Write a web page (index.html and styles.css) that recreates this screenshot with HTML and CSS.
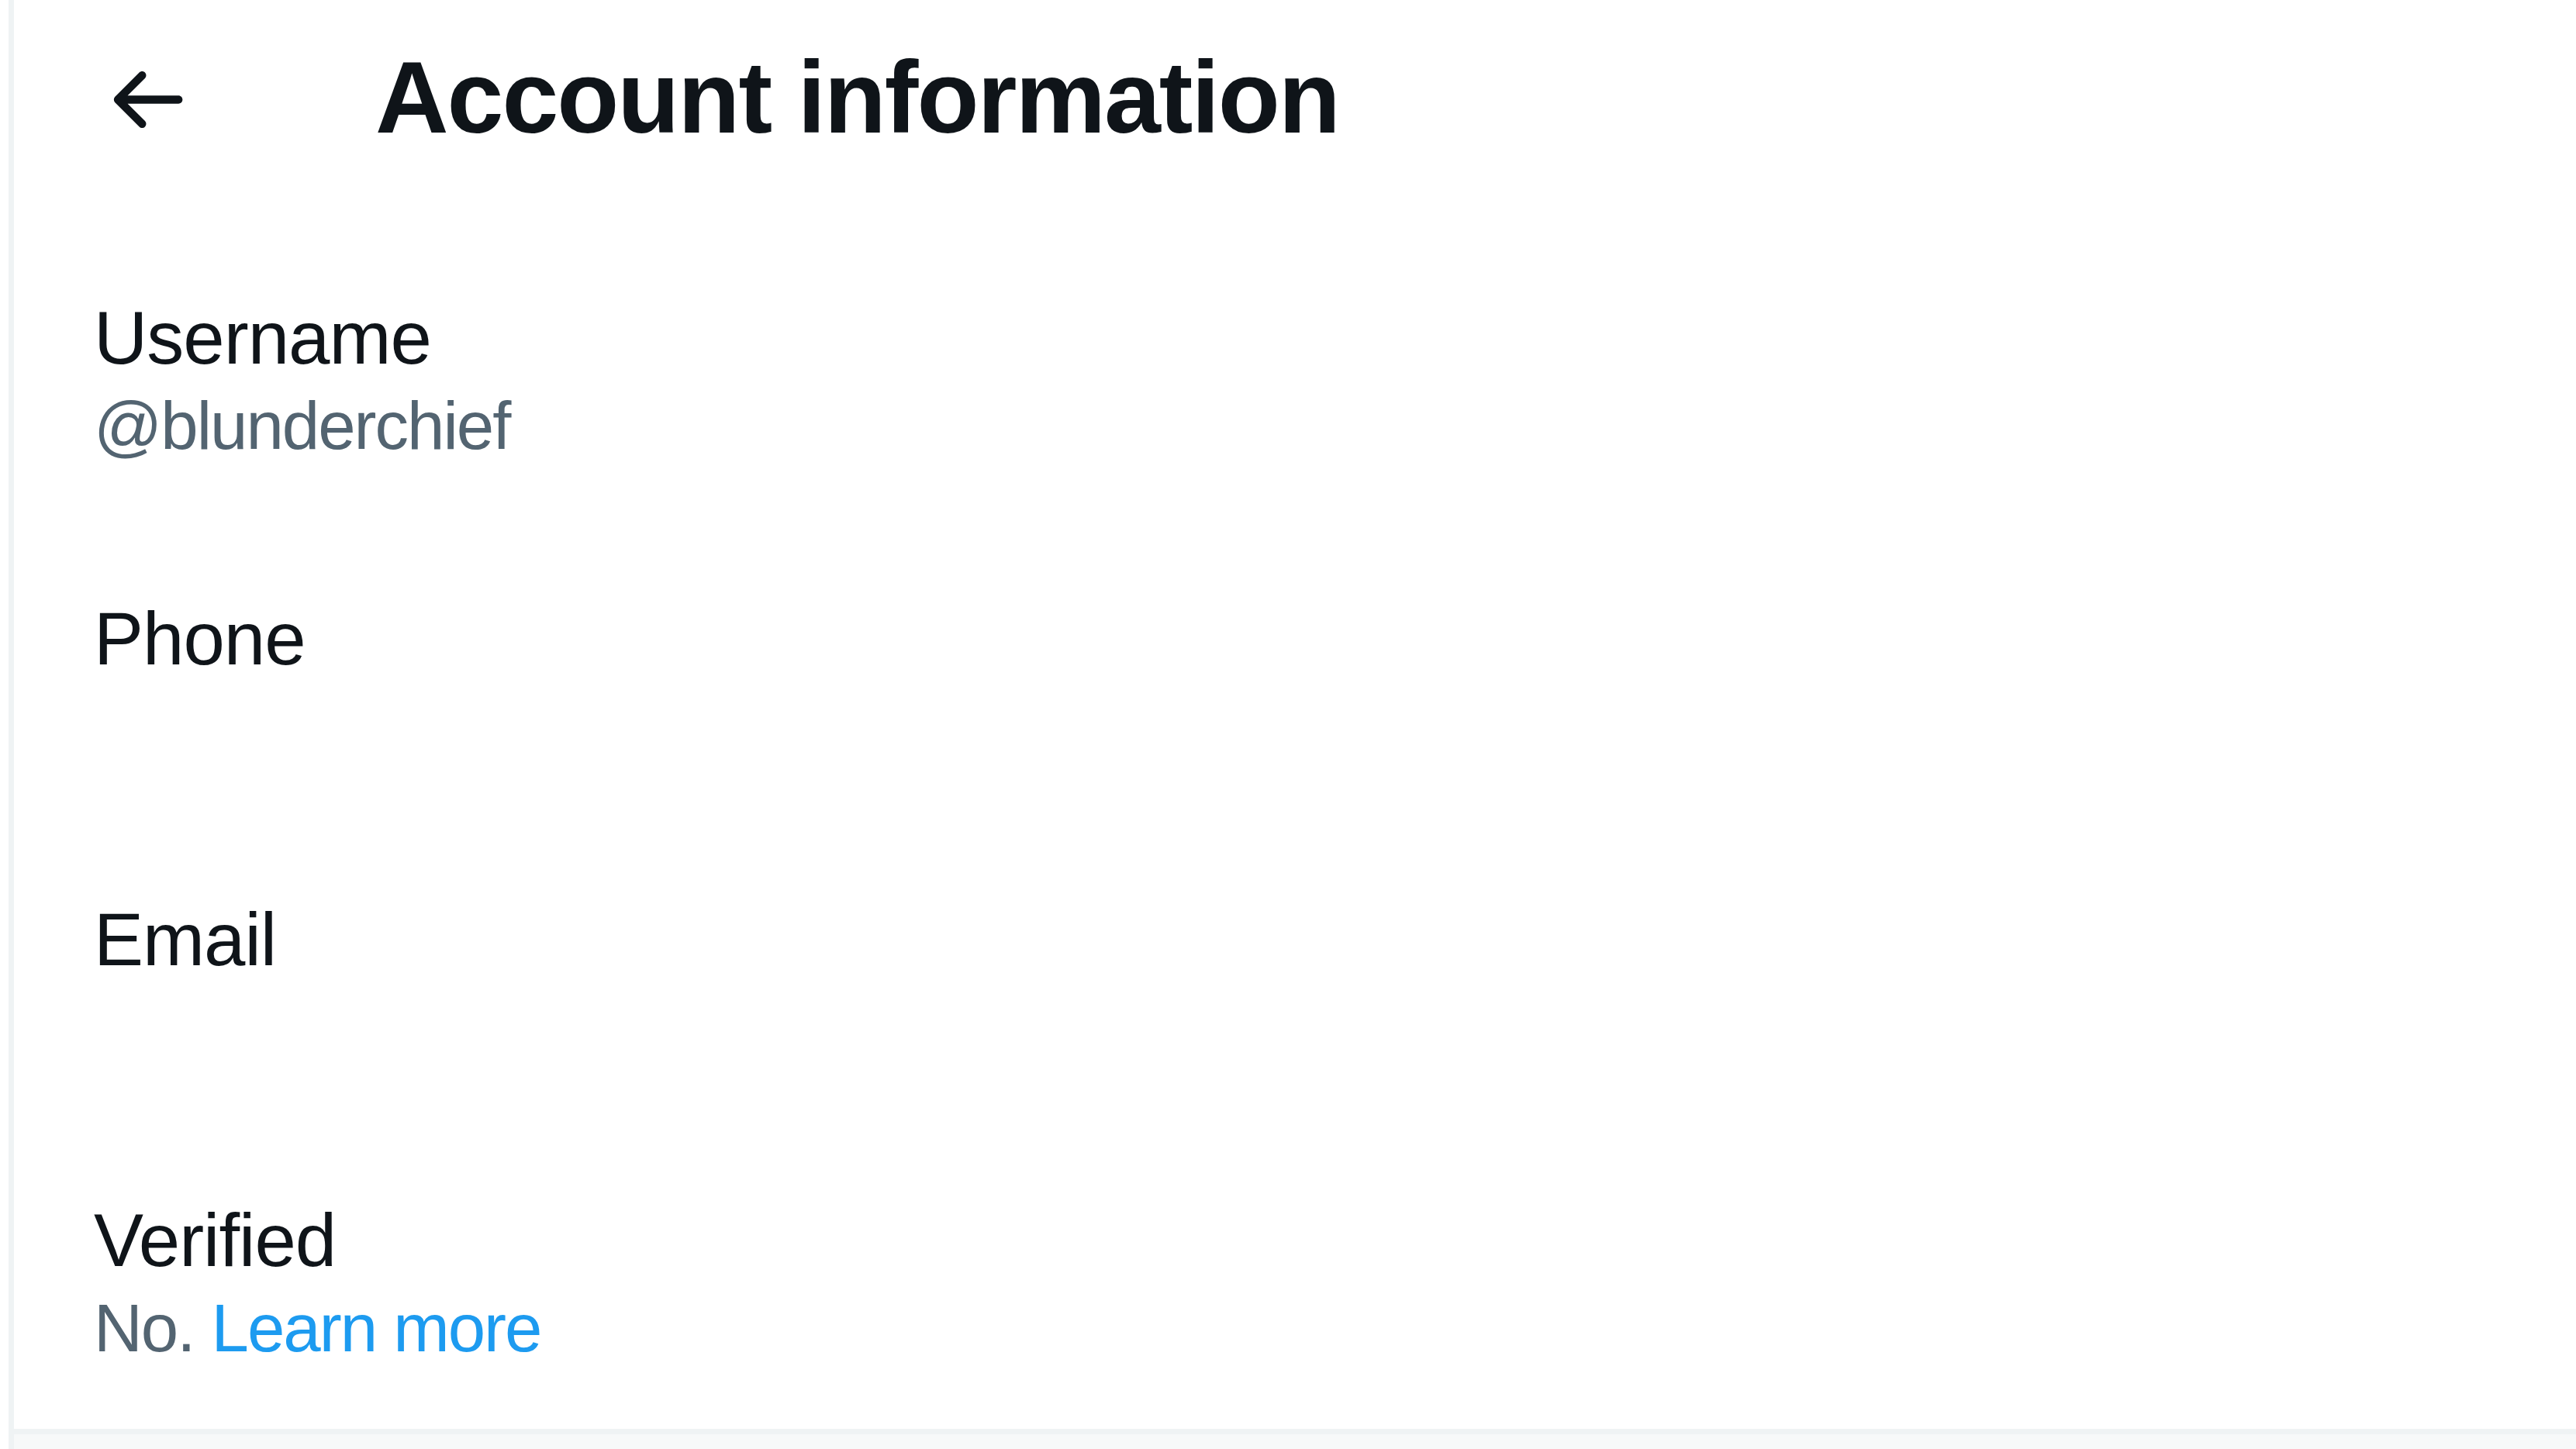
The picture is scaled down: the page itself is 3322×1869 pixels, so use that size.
FILE: index.html
```html
<!DOCTYPE html>
<html lang="en">
<head>
<meta charset="utf-8">
<title>Account information</title>
<link rel="stylesheet" href="styles.css">
</head>
<body>
<div class="page">
  <main class="column">
    <header class="header">
      <div class="back">
        <svg class="back-icon" viewBox="0 0 24 24" aria-hidden="true"><path d="M20 11H7.414l4.293-4.293c.39-.39.39-1.023 0-1.414s-1.023-.39-1.414 0l-6 6c-.39.39-.39 1.023 0 1.414l6 6c.195.195.45.293.707.293s.512-.098.707-.293c.39-.39.39-1.023 0-1.414L7.414 13H20c.553 0 1-.447 1-1s-.447-1-1-1z"/></svg>
      </div>
      <h1 class="title">Account information</h1>
    </header>
    <section class="list">
      <div class="row">
        <div class="label">Username</div>
        <div class="value">@blunderchief</div>
      </div>
      <div class="row">
        <div class="label">Phone</div>
        <div class="value"></div>
      </div>
      <div class="row">
        <div class="label">Email</div>
        <div class="value"></div>
      </div>
      <div class="row">
        <div class="label">Verified</div>
        <div class="value">No. <a class="link" href="#">Learn more</a></div>
      </div>
    </section>
    <div class="footer-band"></div>
  </main>
</div>
</body>
</html>
```
FILE: styles.css
```css
html, body {
  margin: 0;
  padding: 0;
  background: #ffffff;
}
body {
  font-family: "Liberation Sans", Arial, sans-serif;
  color: #0f1419;
}
.page {
  height: 1869px;
  overflow: hidden;
  padding-left: 11px;
}
.column {
  border-left: 7px solid #eff3f4;
  display: flex;
  flex-direction: column;
  height: 1869px;
}
.header {
  display: flex;
  align-items: center;
  padding: 46px 0 85px 108px;
}
.back {
  width: 358px;
  display: flex;
  align-items: center;
}
.back-icon {
  width: 125px;
  height: 125px;
  margin-top: 5px;
  fill: #0f1419;
}
.title {
  margin: 0;
  font-size: 131px;
  line-height: 160px;
  font-weight: 700;
  letter-spacing: -2px;
  white-space: nowrap;
}
.list {
  display: flex;
  flex-direction: column;
}
.row {
  padding: 80px 0 82px 103px;
}
.label {
  font-size: 96px;
  line-height: 130px;
  letter-spacing: -1px;
  color: #0f1419;
}
.value {
  font-size: 87px;
  line-height: 96px;
  height: 96px;
  letter-spacing: -2px;
  color: #536471;
}
.link {
  color: #1d9bf0;
  text-decoration: none;
}
.footer-band {
  flex: 1;
  background: #f7f9f9;
  border-top: 7px solid #eff3f4;
}
```
